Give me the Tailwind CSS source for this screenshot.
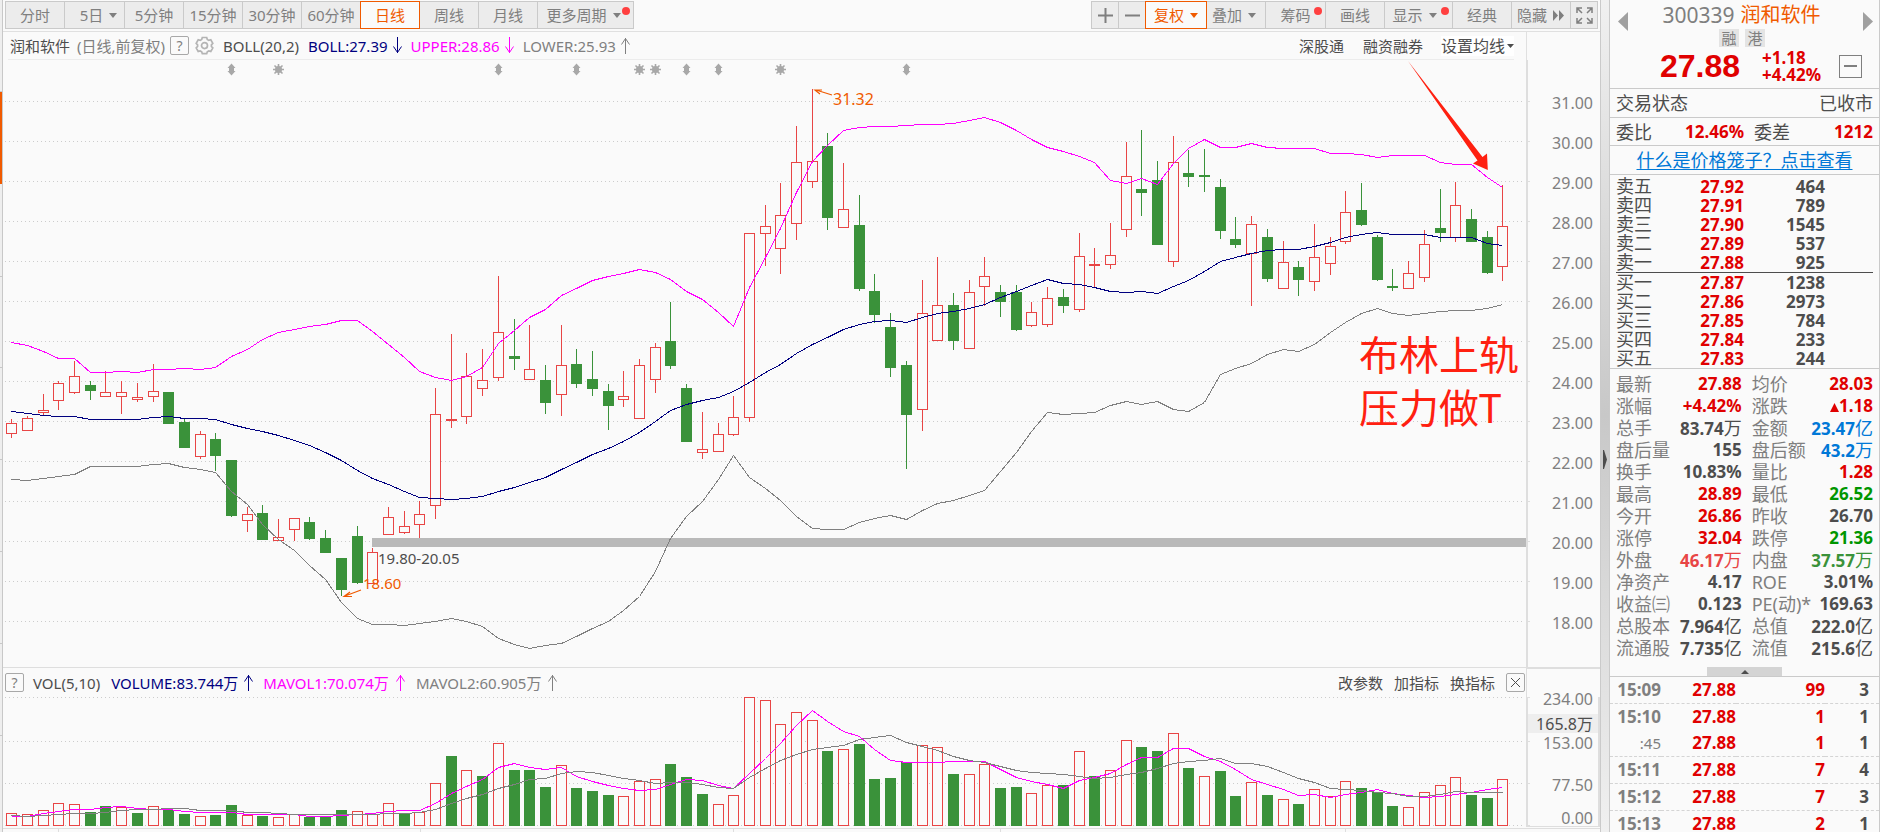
<!DOCTYPE html>
<html lang="zh-CN">
<head>
<meta charset="utf-8">
<title>润和软件 300339 日线</title>
<script src="https://cdn.jsdelivr.net/npm/@tailwindcss/browser@4"></script>
</head>
<body class="bg-[#fafafa] font-['Noto_Sans','Noto_Sans_CJK_SC',sans-serif] text-[15px] leading-5 text-[#4d4d4d]">
<div class="flex h-screen overflow-hidden">

  <!-- collapsed left tab rail -->
  <div class="flex w-[3px] shrink-0 flex-col border-r border-[#c8c8c8] bg-[#eeeeee]">
    <div class="h-[92px] border-b border-[#c8c8c8]"></div>
    <div class="h-[92px] bg-[#f05a00]"></div>
    <div class="h-[92px]"></div>
    <div class="h-[92px] border-y border-[#c8c8c8]"></div>
    <div class="h-[92px] border-b border-[#c8c8c8]"></div>
    <div class="h-[92px] border-b border-[#c8c8c8]"></div>
    <div class="h-[92px] border-b border-[#c8c8c8]"></div>
    <div class="h-[92px] border-b border-[#c8c8c8]"></div>
  </div>

  <main class="flex min-w-0 flex-1 flex-col">
    <!-- toolbar -->
    <div class="flex h-8 shrink-0 items-start justify-between border-b border-[#e0e0e0] pt-px pr-[2px] pl-[2px] text-[#7f7f7f]">
      <div class="flex" id="periods"></div>
      <div class="flex" id="tools"></div>
    </div>

    <!-- indicator line of the main chart -->
    <div class="mr-[73px] flex h-7 shrink-0 items-stretch border-r border-[#e0e0e0] pr-[12px] pl-[5px]">
      <div class="flex flex-1 items-center border-b border-[#ececec] whitespace-nowrap">
        <span class="ml-[2px]">润和软件</span>
        <span class="ml-[7px] text-[#7f7f7f]">(日线,前复权)</span>
        <button class="ml-[5px] h-[19px] w-[19px] rounded-[2px] border border-[#a8a8a8] text-center text-[14px] leading-4 text-[#7f7f7f]">?</button>
        <button class="ml-[6px]" aria-label="设置"><svg width="19" height="19" viewBox="0 0 19 19" fill="none" stroke="#b4b4b4" stroke-width="1.7"><path d="M7.3 1.5h4.4l.6 2 1.5.9 2-.6 2 3.6-1.4 1.5v1.5l1.4 1.5-2 3.5-2-.5-1.5.9-.6 1.9H7.3l-.6-1.9-1.5-.9-2 .5-2-3.5 1.4-1.5V8.900L1.200 7.400l2-3.600 2 .6 1.500-.900z"/><circle cx="9.500" cy="9.600" r="3"/></svg></button>
        <span class="ml-[9px]">BOLL(20,2)</span>
        <span class="ml-[9px] text-[#000080]">BOLL:27.39</span>
        <svg class="ml-[5px]" width="9" height="17" viewBox="0 0 9 17" fill="none" stroke="#000080"><path d="M4.500 0v16M.5 9.500l4 6 4-6"/></svg>
        <span class="ml-[9px] text-[#ff00ff]">UPPER:28.86</span>
        <svg class="ml-[5px]" width="9" height="17" viewBox="0 0 9 17" fill="none" stroke="#ff00ff"><path d="M4.500 0v16M.5 9.500l4 6 4-6"/></svg>
        <span class="ml-[9px] text-[#808080]">LOWER:25.93</span>
        <svg class="ml-[5px]" width="9" height="17" viewBox="0 0 9 17" fill="none" stroke="#808080"><path d="M4.500 17V1M.5 7.500l4-6 4 6"/></svg>
        <button class="ml-auto">深股通</button>
        <button class="ml-[19px]">融资融券</button>
        <button class="ml-[18px] flex items-center gap-[2px] bg-white text-[16px]">设置均线<svg width="7" height="4" viewBox="0 0 7 4" fill="#4d4d4d"><path d="M0 0h7L3.500 4z"/></svg></button>
      </div>
    </div>

    <svg id="kline" class="block w-full shrink-0" viewBox="3 60 1597 607" role="img" aria-label="日K线图"></svg>

    <!-- volume panel -->
    <div class="flex h-[30px] shrink-0 border-t border-[#dedede]">
      <div class="flex flex-1 items-center pl-[2px] whitespace-nowrap">
        <button class="h-[19px] w-[19px] rounded-[2px] border border-[#a8a8a8] text-center text-[14px] leading-4 text-[#7f7f7f]">?</button>
        <span class="ml-[9px]">VOL(5,10)</span>
        <span class="ml-[11px] text-[#000080]">VOLUME:83.744万</span>
        <svg class="ml-[6px]" width="9" height="17" viewBox="0 0 9 17" fill="none" stroke="#000080"><path d="M4.500 17V1M.5 7.500l4-6 4 6"/></svg>
        <span class="ml-[10px] text-[#ff00ff]">MAVOL1:70.074万</span>
        <svg class="ml-[7px]" width="9" height="17" viewBox="0 0 9 17" fill="none" stroke="#ff00ff"><path d="M4.500 17V1M.5 7.500l4-6 4 6"/></svg>
        <span class="ml-[11px] text-[#808080]">MAVOL2:60.905万</span>
        <svg class="ml-[7px]" width="9" height="17" viewBox="0 0 9 17" fill="none" stroke="#808080"><path d="M4.500 17V1M.5 7.500l4-6 4 6"/></svg>
        <button class="ml-auto">改参数</button>
        <button class="ml-[11px]">加指标</button>
        <button class="ml-[11px]">换指标</button>
        <button class="mr-px ml-[11px] grid h-[19px] w-[19px] place-items-center rounded-[2px] border border-[#a8a8a8]" aria-label="关闭"><svg width="11" height="11" viewBox="0 0 11 11" stroke="#4d4d4d"><path d="M1 1l9 9M10 1l-9 9"/></svg></button>
      </div>
      <div class="w-[74px] border-t border-l border-[#dedede]"></div>
    </div>
    <svg id="volume" class="block w-full shrink-0 overflow-visible" viewBox="3 697 1597 135" role="img" aria-label="成交量图"></svg>
  </main>

  <!-- splitter -->
  <div class="flex w-[10px] shrink-0 items-center border-x border-[#cacaca] bg-gradient-to-b from-[#f0f0f0] via-[#c8c8c8] to-[#f0f0f0]">
    <svg class="mt-[86px] ml-[2px] shrink-0" width="4" height="19" viewBox="0 0 4 19" fill="#4d4d4d"><path d="M0 0l1 0 3 9.500L1 19H0z"/></svg>
  </div>

  <aside class="flex w-[270px] shrink-0 flex-col border-r border-[#cacaca] text-[18px]">
    <header class="flex h-[89px] shrink-0 items-start justify-between border-b border-[#cacaca] px-[6px]">
      <button class="mt-[12px] ml-[2px]" aria-label="上一只"><svg width="10" height="19" viewBox="0 0 10 19" fill="#a0a0a0"><path d="M10 0v19L0 9.500z"/></svg></button>
      <div class="flex w-[244px] flex-col">
        <h1 class="mt-px flex h-7 items-center justify-center gap-[6px] pr-2 text-[20px] leading-7"><span class="text-[21px] text-[#7f7f7f]">300339</span><span class="text-[#f05a00]">润和软件</span></h1>
        <div class="flex justify-center gap-[6px] pr-[7px] text-[15px] leading-[18px] text-[#7f7f7f]"><span class="w-5 bg-[#e4e4e4] text-center">融</span><span class="w-5 bg-[#e4e4e4] text-center">港</span></div>
        <div class="flex h-9 w-full items-center pt-[2px] font-bold text-[#e00000]">
          <span class="ml-8 font-['Liberation_Sans',sans-serif] text-[32px] leading-8">27.88</span>
          <span class="ml-[22px] flex flex-col text-[17px] leading-[17px]"><span>+1.18</span><span>+4.42%</span></span>
          <button class="mr-px ml-auto grid h-[23px] w-[23px] shrink-0 place-items-center border border-[#7f7f7f]" aria-label="收起"><span class="h-[2px] w-[13px] bg-[#7f7f7f]"></span></button>
        </div>
      </div>
      <button class="mt-[12px]" aria-label="下一只"><svg width="10" height="19" viewBox="0 0 10 19" fill="#a0a0a0"><path d="M0 0v19l10-9.500z"/></svg></button>
    </header>
    <div class="flex h-[29px] shrink-0 items-center justify-between border-b border-[#cacaca] px-[6px]"><span>交易状态</span><span>已收市</span></div>
    <div class="flex h-7 shrink-0 items-center border-b border-[#cacaca] px-[6px]">
      <span>委比</span><b class="ml-auto text-[17px] font-bold text-[#e00000]">12.46%</b><span class="ml-[10px]">委差</span><b class="w-[83px] text-right text-[17px] font-bold text-[#e00000]">1212</b>
    </div>
    <div class="flex h-[29px] shrink-0 items-center justify-center border-b border-[#cacaca]"><a href="#" class="text-[#0078d7] underline underline-offset-2">什么是价格笼子？点击查看</a></div>
    <div class="shrink-0 border-b border-[#cacaca] px-[6px] pt-[2px]">
      <table class="w-full table-fixed border-collapse"><tbody id="asks"></tbody><tbody id="bids" class="border-t border-[#4d4d4d]"></tbody></table>
    </div>
    <div class="shrink-0 px-[6px] pt-[4px]"><table class="w-full border-collapse whitespace-nowrap"><tbody id="stats"></tbody></table></div>
    <div class="mt-[8px] flex shrink-0 justify-center border-b border-[#cacaca]"><button class="grid h-[9px] w-[75px] place-items-center bg-[#d4d4d4]" aria-label="展开"><svg width="8" height="4" viewBox="0 0 8 4" fill="#4d4d4d"><path d="M0 4h8L4 0z"/></svg></button></div>
    <table class="w-full table-fixed border-collapse"><tbody id="ticks"></tbody></table>
  </aside>
</div>

<script>
const $ = id => document.getElementById(id);
const caret = '<svg width="8" height="5" viewBox="0 0 8 5" fill="currentColor"><path d="M0 0h8L4 5z"/></svg>';
const dot = '<span class="absolute top-[5px] right-[3px] h-2 w-2 rounded-full bg-[#ff4040]"></span>';
const base = 'relative -ml-px flex h-7 items-center justify-center gap-[6px] border whitespace-nowrap first:ml-0 ';
const off = 'border-[#cacaca] bg-[#ececec] ', on = 'z-10 border-[#f05a00] bg-[#fafafa] text-[#f05a00] ';
const btn = ([html, w, active, label]) => `<button class="${base}${active ? on : off}${w}"${label ? ` aria-label="${label}"` : ''}>${html}</button>`;

$('periods').innerHTML = [
  ['分时', 'w-[60px]'], ['5日' + caret, 'w-[61px] pl-2'], ['5分钟', 'w-[60px]'], ['15分钟', 'w-[60px]'], ['30分钟', 'w-[60px]'],
  ['60分钟', 'w-[60px]'], ['日线', 'w-[60px]', 1], ['周线', 'w-[60px]'], ['月线', 'w-[60px]'], ['更多周期' + caret + dot, 'w-[97px] pr-1']
].map(btn).join('');
$('tools').innerHTML = [
  ['<svg width="15" height="15" stroke="#7f7f7f" stroke-width="2"><path d="M7.500 0v15M0 7.500h15"/></svg>', 'w-7', 0, '放大'],
  ['<svg width="15" height="15" stroke="#7f7f7f" stroke-width="2"><path d="M0 7.500h15"/></svg>', 'w-7', 0, '缩小'],
  ['复权' + caret, 'w-[62px]', 1], ['叠加' + caret, 'w-[60px] pr-1'], ['筹码' + dot, 'w-[61px]'], ['画线', 'w-[60px]'],
  ['显示' + caret + dot, 'w-[69px] pr-2'], ['经典', 'w-[60px]'],
  ['隐藏<svg width="12" height="11" viewBox="0 0 12 11" fill="#7f7f7f"><path d="M0 0v11l5-5.500zM6 0v11l5-5.500z"/></svg>', 'w-[60px]'],
  ['<svg width="17" height="17" viewBox="0 0 17 17" fill="none" stroke="#7f7f7f" stroke-width="1.500"><path d="M1 6V1h5M1 1l5 5M11 1h5v5M16 1l-5 5M1 11v5h5M1 16l5-5M16 11v5h-5M16 16l-5-5"/></svg>', 'w-7', 0, '全屏']
].map(btn).join('');

// order book
const level = ([n, p, v]) => `<tr class="h-[19px] leading-[19px]"><td class="w-[55px] p-0">${n}</td><td class="w-[73px] p-0 text-right text-[17px] font-bold text-[#e00000]">${p}</td><td class="w-[81px] p-0 text-right text-[17px] font-bold">${v}</td><td class="p-0"></td></tr>`;
$('asks').innerHTML = [['卖五', '27.92', 464], ['卖四', '27.91', 789], ['卖三', '27.90', 1545], ['卖二', '27.89', 537], ['卖一', '27.88', 925]].map(level).join('');
$('bids').innerHTML = [['买一', '27.87', 1238], ['买二', '27.86', 2973], ['买三', '27.85', 784], ['买四', '27.84', 233], ['买五', '27.83', 244]].map(level).join('');

// statistics; colour keys: r up, g down, b amount, k plain, s/t outer and inner volume
const tone = { r: 'text-[#e00000]', g: 'text-[#009600]', b: 'text-[#0078d7]', k: 'text-[#4d4d4d]', s: 'text-[#e84545]', t: 'text-[#3a923a]' };
const value = s => s.replace(/[万亿]/, '<span class="text-[18px] font-normal">$&</span>').replace('▲', '<svg class="inline" width="9" height="9" fill="#e00000"><path d="M0 9h9L4.500 0z"/></svg>');
$('stats').innerHTML = [
  ['最新', '27.88', 'r', '均价', '28.03', 'r'], ['涨幅', '+4.42%', 'r', '涨跌', '▲1.18', 'r'],
  ['总手', '83.74万', 'k', '金额', '23.47亿', 'b'], ['盘后量', '155', 'k', '盘后额', '43.2万', 'b'],
  ['换手', '10.83%', 'k', '量比', '1.28', 'r'], ['最高', '28.89', 'r', '最低', '26.52', 'g'],
  ['今开', '26.86', 'r', '昨收', '26.70', 'k'], ['涨停', '32.04', 'r', '跌停', '21.36', 'g'],
  ['外盘', '46.17万', 's', '内盘', '37.57万', 't'], ['净资产', '4.17', 'k', 'ROE', '3.01%', 'k'],
  ['收益㈢', '0.123', 'k', 'PE(动)*', '169.63', 'k'], ['总股本', '7.964亿', 'k', '总值', '222.0亿', 'k'],
  ['流通股', '7.735亿', 'k', '流值', '215.6亿', 'k']
].map(([a, b, c, d, e, f]) => `<tr class="h-[22px] leading-[20px]"><td class="w-[55px] p-0 text-[#7f7f7f]">${a}</td><td class="w-[73px] p-0 text-right text-[17px] font-bold ${tone[c]}">${value(b)}</td><td class="w-[60px] p-0 pl-[10px] text-[#7f7f7f]">${d}</td><td class="p-0 text-right text-[17px] font-bold ${tone[f]}">${value(e)}</td></tr>`).join('');

// ticks
$('ticks').innerHTML = [['15:09', 99, 3, 1], ['15:10', 1, 1, 0], [':45', 1, 1, 1], ['15:11', 7, 4, 1], ['15:12', 7, 3, 1], ['15:13', 2, 1, 1]]
  .map(([t, v, n, line]) => `<tr class="h-[26px] text-[17px] leading-[26px] font-bold ${line ? 'border-b border-dashed border-[#d4d4d4]' : ''}"><td class="w-[51px] p-0 text-right ${t[0] === ':' ? 'text-[15px] font-normal' : ''} text-[#7f7f7f]">${t}</td><td class="w-[75px] p-0 text-right text-[#e00000]">27.88</td><td class="w-[89px] p-0 text-right text-[#e00000]">${v}</td><td class="p-0 pr-[10px] text-right">${n}</td></tr>`).join('');

// chart drawing
const RED = '#e84545', GREEN = '#3a923a', MAGENTA = '#ff00ff', NAVY = '#000080', GREY = '#808080';
const X = i => Math.floor(11.76 + 15.695 * i) + 0.5;
const line = (ys, c) => `<polyline shape-rendering="crispEdges" fill="none" stroke="${c}" points="${ys.map((y, i) => X(i) + ',' + (y + 0.5)).join(' ')}"/>`;
const grid = y => `<path shape-rendering="crispEdges" stroke="#cccccc" stroke-dasharray="1 3" d="M5 ${y + 0.5}H1523"/><path stroke="#dedede" d="M1527 ${y + 0.5}h3"/>`;
const label = (x, y, t, c, size, anchor) => `<text x="${x}" y="${y}" fill="${c}" font-size="${size}" text-anchor="${anchor || 'end'}">${t}</text>`;

// colour, high, body top, body bottom, low
const candles = `r419,423,433,437 r416,418,430,430 r394,410,412,415 r381,383,400,409 r361,376,392,393 g381,385,390,399 r371,392,396,396 r381,392,396,413 r383,397,399,401 r364,391,396,401
g392,392,423,423 g419,422,447,447 r431,434,456,458 g433,439,455,470 g460,460,515,516 r507,514,520,531 g505,513,539,539 r519,537,540,540 r518,518,529,540 g517,522,538,539
g530,538,552,552 g558,558,589,595 g526,536,582,583 r548,552,583,583 r507,517,534,534 r511,526,532,533 r501,514,524,537 r388,414,505,518 r334,419,420,427 r353,376,416,423
r349,380,388,395 r276,332,377,380 g319,356,358,369 r325,369,379,379 g365,380,402,413 r325,365,394,415 g349,364,383,387 g351,379,388,395 g384,391,405,429 r371,396,399,406
r359,365,418,418 r343,347,379,392 g302,341,365,368 g384,388,441,441 r412,449,452,458 r423,434,451,451 r396,417,434,435 r233,233,417,421 r205,226,233,265 r183,215,248,273
r126,162,223,239 r89,161,181,187 g133,146,217,229 r163,209,227,227 g195,225,288,290 g274,291,314,322 g313,327,367,376 g361,365,414,468 r280,313,409,430 r257,305,340,340
g293,305,340,349 r280,292,348,348 r257,276,286,305 g285,292,301,316 g285,292,329,330 r302,312,325,326 r287,298,324,326 g289,297,305,312 r233,256,309,311 r248,264,265,287
r223,255,264,268 r142,176,229,236 g130,189,192,215 g161,180,244,244 r136,162,261,266 g150,173,176,186 g149,175,176,191 g179,187,230,238 g217,239,244,247 r216,224,253,305
g229,237,278,281 r241,262,288,288 g261,267,279,295 r224,257,281,290 r237,246,263,274 r191,212,241,243 g183,210,224,225 g235,237,279,280 g269,286,287,290 r261,273,288,288
r230,244,277,281 g189,228,232,241 r182,205,237,241 g209,219,241,241 g231,237,272,273 r185,226,266,280`.split(/\s+/);
const upper = [342,345,351,358,358,372,372,371,372,369,369,368,369,367,356,349,339,332,329,326,324,320,320,331,344,357,371,377,380,376,367,343,330,317,309,295,288,280,276,273,269,272,279,291,299,312,326,287,257,228,192,161,145,130,127,126,126,125,124,124,123,120,117,122,130,139,147,151,156,162,180,183,178,184,163,148,139,147,147,143,147,148,148,148,153,153,154,157,155,155,155,162,164,164,177,187];
const middle = [411,413,415,416,416,419,419,419,419,417,416,418,418,419,424,428,431,435,440,445,452,460,470,478,484,491,497,498,499,498,496,491,487,482,477,469,462,454,448,441,432,421,410,404,400,397,391,382,372,364,353,344,337,329,324,321,320,322,317,313,311,308,304,297,291,285,279,283,284,287,291,292,291,293,286,280,271,261,257,253,250,249,249,246,242,237,234,232,234,234,234,237,237,237,243,245];
const lower = [479,480,478,476,474,466,466,466,466,464,463,467,469,472,491,504,524,539,550,565,579,602,618,624,624,625,623,621,618,621,626,638,644,648,645,643,636,628,621,610,596,571,538,516,501,479,455,477,488,500,516,528,529,529,522,518,515,519,510,503,500,495,490,471,452,431,412,414,413,412,405,401,404,401,409,411,402,374,368,363,354,349,351,344,332,322,313,308,313,315,313,311,310,310,308,304];

let k = '<g shape-rendering="crispEdges">';
for (let p = 0; p < 14; p++) {
  const y = Math.round(101.3 + 39.95 * p);
  k += grid(y) + label(1593, y + 8, (31 - p) + '.00', '#7f7f7f', 16);
}
k += '<path stroke="#dedede" stroke-width="2" d="M1527 60V667"/>';
k += '<rect x="372" y="538" width="1154" height="9" fill="#b9b9b9"/>';
candles.forEach((s, i) => {
  const [h, t, b, l] = s.slice(1).split(',').map(Number), x = X(i), up = s[0] === 'r', c = up ? RED : GREEN;
  k += `<path stroke="${c}" d="M${x} ${h}V${t}M${x} ${b + 1}V${l + 1}"/>`;
  k += up ? `<rect x="${x - 5}" y="${t + 0.5}" width="10" height="${b - t}" fill="#fafafa" stroke="${c}"/>`
          : `<rect x="${x - 5.5}" y="${t}" width="11" height="${b - t + 1}" fill="${c}"/>`;
});
k += '</g>' + line(upper, MAGENTA) + line(middle, NAVY) + line(lower, GREY);
[14, 31, 36, 43, 45, 57].forEach(i => { k += `<path fill="#a8a8a8" d="M${X(i)} 63.500l4 4.500h-1.500v3h1.500l-4 4.500-4-4.500h1.500v-3h-1.500z"/>`; });
[17, 40, 41, 49].forEach(i => { const x = X(i); k += `<g stroke="#a8a8a8" stroke-width="1.600"><circle cx="${x}" cy="69.500" r="3.500" fill="#a8a8a8" stroke="none"/><path d="M${x} 64v11M${x - 5.5} 69.500h11M${x - 4} 65.500l8 8M${x + 4} 65.500l-8 8"/></g>`; });
k += `<path fill="none" stroke="#f05a00" stroke-width="1.200" d="M832 95l-16-5M822 90l-7 0 5 4M361 590l-16 6M350 592l-6 4.500h8"/>`;
k += label(833, 105, '31.32', '#f05a00', 16, 'start') + label(363, 589, '18.60', '#f05a00', 15, 'start') + label(378, 564, '19.80-20.05', '#4d4d4d', 15, 'start');
k += '<path fill="#ff2010" d="M1408 61L1482.500 157 1487 153.500 1487.800 170 1473 163.500 1477.500 160.500z"/>';
k += label(1359, 370, '布林上轨', '#ff2010', 40, 'start') + label(1359, 423, '压力做T', '#ff2010', 40, 'start');
$('kline').innerHTML = k;

const bars = `r813 r814 r810 r803 r804 g812 g806 r807 g813 r806 g810 g814 r816 g815 g805 r815 g816 r817 r814 g817 g816 g810 r811 r814 r803 g813 r812 r783 g756 r770 g776 r743 g770 g770 g787 r765 g788 g791 g795 r796 r781 r779 g764 g777 g794 r804 r795 r697 r700 r724 r712 r720 g751 r749 g744 g779 g778 g762 r745 r747 g774 r774 r764 g788 g787 r793 r785 g785 r751 g776 r770 r740 g747 g751 r733 g768 r776 g771 g796 r782 g795 r799 g804 r789 r796 r781 g788 g792 g806 r807 r792 r785 r777 g795 g798 r779`.split(' ');
const ma5 = [816,816,813,811,809,809,807,806,808,809,809,811,812,812,812,814,814,814,814,816,816,815,814,813,811,810,810,803,793,786,779,767,763,767,769,767,776,781,785,788,790,789,784,779,780,785,788,773,758,743,725,710,721,731,736,749,760,762,762,762,761,761,761,769,777,781,784,788,780,777,773,764,757,757,748,748,756,761,769,779,784,789,795,794,797,794,792,789,793,795,797,796,794,792,789,787];
const ma10 = [815,816,815,814,813,813,812,810,809,809,808,808,810,810,810,812,812,813,814,814,814,814,814,814,813,813,812,809,803,798,794,788,784,779,778,773,771,772,775,778,780,783,782,782,784,787,788,777,768,760,754,749,747,745,739,737,735,742,746,750,756,760,762,766,770,772,773,774,776,778,777,774,772,768,763,761,760,758,763,763,766,772,778,782,788,789,790,792,793,796,796,794,791,792,792,792];
let v = '<g shape-rendering="crispEdges">' + [697, 741, 783, 825].map(grid).join('');
v += '<path stroke="#dedede" stroke-width="2" d="M1527 697V827M1599 697V827"/><path stroke="#dedede" d="M3 828.500H1600M58.500 828v4M420.500 828v4M733.500 828v4M1000.500 828v4M1345.500 828v4M1527 826.500h73"/>';
v += '<rect x="1528" y="714" width="70" height="19" fill="#eeeeee"/>';
bars.forEach((s, i) => {
  const y = +s.slice(1), x = X(i);
  v += s[0] === 'r' ? `<rect x="${x - 5}" y="${y + 0.5}" width="10" height="${825 - y}" fill="#fafafa" stroke="${RED}"/>`
                    : `<rect x="${x - 5.5}" y="${y}" width="11" height="${826 - y}" fill="${GREEN}"/>`;
});
v += '</g>' + line(ma5, MAGENTA) + line(ma10, GREY);
[['234.00', 705], ['153.00', 749], ['77.50', 791], ['0.00', 824]].forEach(([t, y]) => { v += label(1593, y, t, '#7f7f7f', 16); });
v += label(1593, 730, '165.8万', '#4d4d4d', 16);
$('volume').innerHTML = v;
</script>
</body>
</html>
